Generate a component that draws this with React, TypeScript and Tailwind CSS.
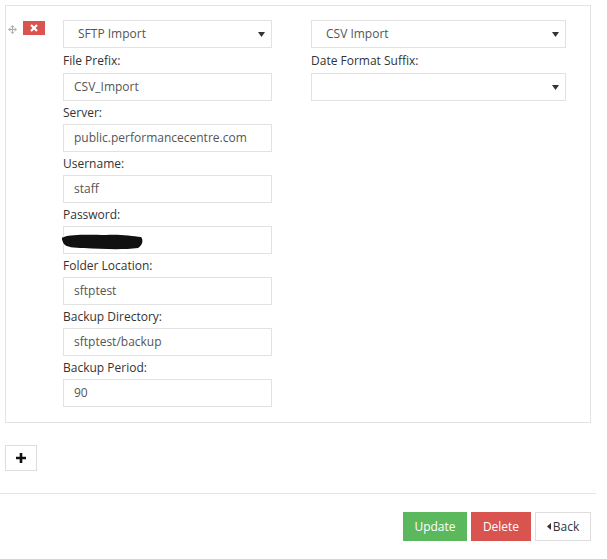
import React from 'react';

const font = { fontFamily: '"Open Sans", "Liberation Sans", sans-serif' };

function Caret() {
  return (
    <svg width="7" height="5" viewBox="0 0 7 5" className="shrink-0">
      <path d="M0 0H7L3.5 5Z" fill="#333" />
    </svg>
  );
}

function SelectBox({ value, width }: { value: string; width: string }) {
  return (
    <div className={`flex h-[28px] ${width} items-center justify-between border border-[#e2e2e2] bg-white pl-[14px] pr-[6px] text-[12px] text-[#555]`}>
      <span>{value}</span>
      <Caret />
    </div>
  );
}

function Field({ label, value, first, children }: { label: string; value?: string; first?: boolean; children?: React.ReactNode }) {
  return (
    <div className="flex flex-col">
      <div className={`flex ${first ? 'h-[25px]' : 'h-[23px]'} items-center text-[12px] text-[#333]`}>{label}</div>
      <div className="relative flex h-[28px] w-[209px] items-center border border-[#e2e2e2] bg-white px-[10px] text-[12px] text-[#555]">
        {value}
        {children}
      </div>
    </div>
  );
}

export default function App() {
  return (
    <div className="min-h-[559px] w-[607px] bg-white" style={font}>
      <div className="w-[596px] pl-[5px] pt-[5px]">
        {/* rule panel */}
        <div className="flex w-[586px] border border-[#e3e3e3] pb-[15px] pt-[14px]">
          <div className="flex w-[57px] items-start pl-[2px] pt-[1px]">
            <svg width="9" height="9" viewBox="0 0 9 9" className="mt-[4px]">
              <path d="M4.5 0L6.5 2.3H2.5Z M4.5 9L6.5 6.7H2.5Z M0 4.5L2.3 2.5V6.5Z M9 4.5L6.7 2.5V6.5Z M4 2H5V7H4Z M2 4H7V5H2Z" fill="#aaa" />
            </svg>
            <div className="ml-[6px] flex h-[14px] w-[22px] items-center justify-center bg-[#d9534f]">
              <svg width="8" height="8" viewBox="0 0 8 8">
                <path d="M1 1L7 7M7 1L1 7" stroke="#fff" strokeWidth="2.2" />
              </svg>
            </div>
          </div>

          <div className="flex flex-col">
            <SelectBox value="SFTP Import" width="w-[209px]" />
            <Field first label="File Prefix:" value="CSV_Import" />
            <Field label="Server:" value="public.performancecentre.com" />
            <Field label="Username:" value="staff" />
            <Field label="Password:">
              <svg width="82" height="20" viewBox="0 0 82 20" className="absolute left-[-2px] top-[4px]">
                <path d="M2 6C10 3 30 4 44 4C56 3 70 5 79 6C82 9 80 15 76 17C60 19 40 18 22 17C12 17 4 16 2 13C0 10 0 8 2 6Z" fill="#111" />
                <path d="M0 8C12 7 30 8 48 7" stroke="#111" strokeWidth="3" fill="none" />
              </svg>
            </Field>
            <Field label="Folder Location:" value="sftptest" />
            <Field label="Backup Directory:" value="sftptest/backup" />
            <Field label="Backup Period:" value="90" />
          </div>

          <div className="ml-[39px] flex flex-col">
            <SelectBox value="CSV Import" width="w-[255px]" />
            <div className="flex h-[25px] items-center text-[12px] text-[#333]">Date Format Suffix:</div>
            <SelectBox value="" width="w-[255px]" />
          </div>
        </div>

        <button className="mt-[22px] flex h-[26px] w-[32px] items-center justify-center border border-[#ddd] bg-white">
          <svg width="10" height="10" viewBox="0 0 10 10">
            <path d="M5 0V10M0 5H10" stroke="#111" strokeWidth="2.6" />
          </svg>
        </button>
      </div>

      <div className="mt-[22px] h-px w-[596px] bg-[#e5e5e5]" />

      <div className="flex w-[591px] justify-end gap-[4px] pt-[18px] text-[12px]">
        <button className="flex h-[29px] w-[64px] items-center justify-center bg-[#5cb85c] text-white">Update</button>
        <button className="flex h-[29px] w-[60px] items-center justify-center bg-[#d9534f] text-white">Delete</button>
        <button className="flex h-[29px] w-[56px] items-center justify-center gap-[2px] border border-[#ddd] bg-white text-[#333]">
          <svg width="4" height="7" viewBox="0 0 4 7">
            <path d="M4 0V7L0 3.5Z" fill="#333" />
          </svg>
          Back
        </button>
      </div>
    </div>
  );
}
